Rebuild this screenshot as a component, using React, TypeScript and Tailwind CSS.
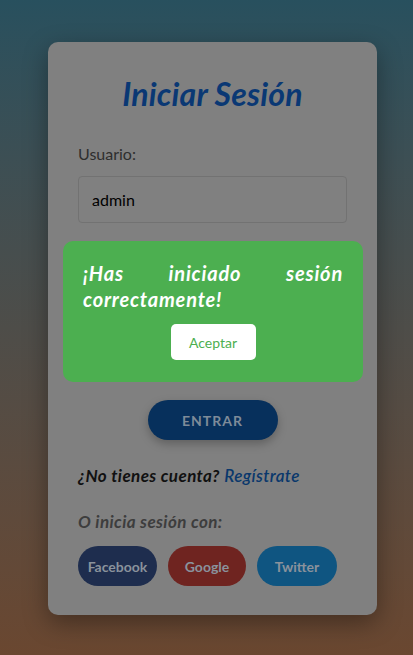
import { useState } from "react";

const App = () => {
    const [usuario, setUsuario] = useState("admin");
    const [clave, setClave] = useState("");
    const [open, setOpen] = useState(true);

    return (
        <div className="relative min-h-[655px] w-full bg-gradient-to-b from-[#28505e] to-[#6a4730] font-['Lato','Open_Sans',sans-serif] flex items-start justify-center pl-[12px] pt-[42px] pb-[40px]">
            <div className="w-[329px] rounded-[10px] bg-[#808080] px-[30px] pt-[32px] pb-[29px] shadow-[0_8px_24px_rgba(0,0,0,0.35)]">
                <h2 className="text-center text-[32px] font-bold italic tracking-[0.2px] text-[#0a3874] leading-[40px]">Iniciar Sesión</h2>

                <div className="mt-[30px] flex flex-col">
                    <label className="text-[16px] leading-[20px] text-[#2e2e2e]">Usuario:</label>
                    <input
                        value={usuario}
                        onChange={(e) => setUsuario(e.target.value)}
                        className="mt-[12px] h-[47px] w-full rounded-[4px] border border-[#727272] bg-transparent px-[13px] text-[16px] text-black outline-none"
                    />
                </div>

                <div className="mt-[20px] flex flex-col">
                    <label className="text-[16px] leading-[20px] text-[#2e2e2e]">Contraseña:</label>
                    <input
                        type="password"
                        value={clave}
                        onChange={(e) => setClave(e.target.value)}
                        className="mt-[12px] h-[47px] w-full rounded-[4px] border border-[#727272] bg-transparent px-[13px] text-[16px] text-black outline-none"
                    />
                </div>

                <div className="mt-[78px] flex justify-center">
                    <button className="h-[40px] w-[130px] rounded-full bg-[#07305c] text-[14px] font-bold tracking-[1px] text-[#7e8b99] shadow-[0_4px_10px_rgba(0,0,0,0.25)]">
                        ENTRAR
                    </button>
                </div>

                <p className="mt-[25px] text-[17px] leading-[22px] italic tracking-[0.4px]">
                    <span className="font-bold text-[#111111]">¿No tienes cuenta?</span>{" "}
                    <a className="text-[#0a386c] font-semibold">Regístrate</a>
                </p>

                <p className="mt-[24px] text-[17px] leading-[22px] font-bold italic tracking-[0.4px] text-[#3d3d3d]">O inicia sesión con:</p>

                <div className="mt-[13px] flex gap-[11px]">
                    <button className="h-[40px] w-[79px] rounded-full bg-[#1e2d4e] text-[14px] font-bold text-[#8a929c]">Facebook</button>
                    <button className="h-[40px] w-[78px] rounded-full bg-[#6f2420] text-[14px] font-bold text-[#8a929c]">Google</button>
                    <button className="h-[40px] w-[80px] rounded-full bg-[#0f5581] text-[14px] font-bold text-[#8a929c]">Twitter</button>
                </div>
            </div>

            {open && (
                <div className="absolute left-[63px] top-[241px] w-[300px] rounded-[10px] bg-[#4caf50] px-[20px] pt-[19px] pb-[22px]">
                    <p className="text-justify text-[20px] leading-[26px] font-bold italic tracking-[0.8px] text-white">
                        ¡Has iniciado sesión correctamente!
                    </p>
                    <div className="mt-[12px] flex justify-center">
                        <button
                            onClick={() => setOpen(false)}
                            className="h-[36px] w-[85px] rounded-[5px] bg-white text-[14px] text-[#4caf50]"
                        >
                            Aceptar
                        </button>
                    </div>
                </div>
            )}
        </div>
    );
};

export default App;
